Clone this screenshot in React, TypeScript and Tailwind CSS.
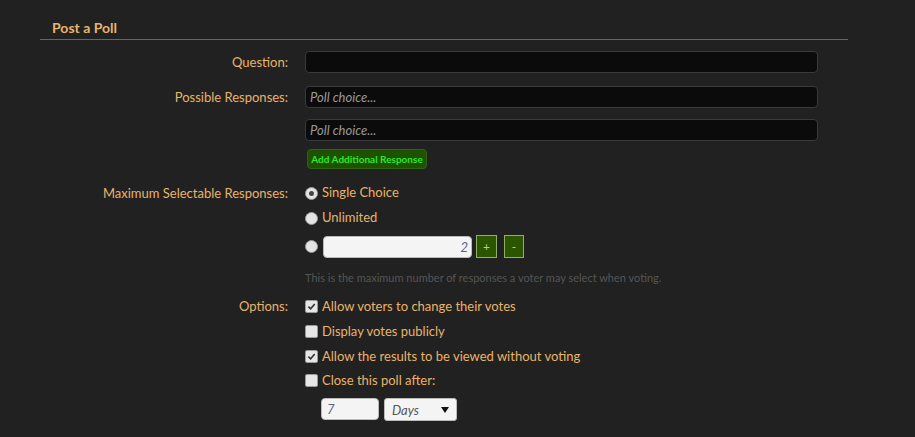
import { useState } from "react";

const label = "text-right text-[13px] text-[#e8b46a] leading-[22px]";
const font = { fontFamily: 'Lato, "Noto Sans", sans-serif' };

function Check({ on }: { on?: boolean }) {
  return (
    <span className="inline-flex h-[13px] w-[13px] items-center justify-center rounded-[2px] border border-[#9a9a9a] bg-[#e6e6e6]">
      {on && (
        <svg viewBox="0 0 10 10" className="h-[9px] w-[9px]">
          <path d="M1.5 5.2 L4 7.6 L8.6 2.2" fill="none" stroke="#333" strokeWidth="1.8" />
        </svg>
      )}
    </span>
  );
}

function Radio({ on }: { on?: boolean }) {
  return (
    <span className="inline-flex h-[13px] w-[13px] items-center justify-center rounded-full border border-[#9a9a9a] bg-[#e4e4e4]">
      {on && <span className="h-[5px] w-[5px] rounded-full bg-[#444]" />}
    </span>
  );
}

export default function App() {
  const [count] = useState(2);
  const dark = "h-[22px] w-full rounded-[4px] border border-[#3a3a3a] bg-[#0b0b0b] px-[4px] text-[13px] italic text-[#999] leading-[20px]";
  return (
    <div className="min-h-[437px] w-[915px] bg-[#212121] pt-[19px]" style={font}>
      <div className="ml-[40px] w-[808px] border-b border-[#666] pb-[2px] pl-[12px] text-[14px] font-bold leading-[18px] text-[#e8b46a]">
        Post a Poll
      </div>
      <div className="mt-[11px] grid grid-cols-[288px_513px] gap-x-[17px]">
        <div className={label}>Question:</div>
        <div className={dark}></div>

        <div className={`${label} mt-[13px]`}>Possible Responses:</div>
        <div className="mt-[13px] flex flex-col">
          <div className={dark}>Poll choice...</div>
          <div className={`${dark} mt-[11px]`}>Poll choice...</div>
          <div className="mt-[8px] flex">
            <span className="ml-[2px] h-[20px] w-[120px] whitespace-nowrap rounded-[4px] border border-[#2e6410] bg-[#1e5200] text-center text-[10px] font-bold leading-[18px] text-[#2ee62e]">
              Add Additional Response
            </span>
          </div>
        </div>

        <div className={`${label} mt-[13px]`}>Maximum Selectable Responses:</div>
        <div className="mt-[13px] flex flex-col text-[13px] text-[#e8b46a]">
          <div className="flex h-[22px] items-center gap-[4px]">
            <Radio on />
            <span>Single Choice</span>
          </div>
          <div className="mt-[3px] flex h-[22px] items-center gap-[4px]">
            <Radio />
            <span>Unlimited</span>
          </div>
          <div className="mt-[6px] flex h-[23px] items-center">
            <Radio />
            <span className="ml-[5px] h-[22px] w-[149px] rounded-[4px] border border-[#bbb] bg-[#f4f4f4] pr-[3px] text-right text-[13px] italic leading-[20px] text-[#55657d]">
              {count}
            </span>
            <span className="ml-[4px] flex h-[23px] w-[21px] items-center justify-center border border-[#8fae6e] bg-[#2c5500] text-[12px] text-[#b8d08a]">+</span>
            <span className="ml-[7px] flex h-[23px] w-[20px] items-center justify-center border border-[#8fae6e] bg-[#2c5500] text-[12px] text-[#b8d08a]">-</span>
          </div>
          <div className="mt-[13px] text-[11px] leading-[14px] text-[#555]">
            This is the maximum number of responses a voter may select when voting.
          </div>
        </div>

        <div className={`${label} mt-[10px]`}>Options:</div>
        <div className="mt-[10px] flex flex-col text-[13px] leading-[22px] text-[#e8b46a]">
          <label className="flex h-[22px] items-center gap-[4px]"><Check on />Allow voters to change their votes</label>
          <label className="mt-[3px] flex h-[22px] items-center gap-[4px]"><Check />Display votes publicly</label>
          <label className="mt-[3px] flex h-[22px] items-center gap-[4px]"><Check on />Allow the results to be viewed without voting</label>
          <label className="mt-[2px] flex h-[22px] items-center gap-[4px]"><Check />Close this poll after:</label>
          <div className="mt-[7px] ml-[16px] flex gap-[5px]">
            <span className="h-[22px] w-[58px] rounded-[4px] border border-[#bbb] bg-[#f4f4f4] px-[5px] text-[13px] italic leading-[20px] text-[#55657d]">7</span>
            <span className="flex h-[23px] w-[73px] items-center justify-between rounded-[3px] border border-[#bbb] bg-[#f4f4f4] px-[7px] text-[13px] italic text-[#555]">
              Days
              <svg viewBox="0 0 8 8" className="h-[8px] w-[8px]"><path d="M0 1 L8 1 L4 7 Z" fill="#111" /></svg>
            </span>
          </div>
        </div>
      </div>
    </div>
  );
}
